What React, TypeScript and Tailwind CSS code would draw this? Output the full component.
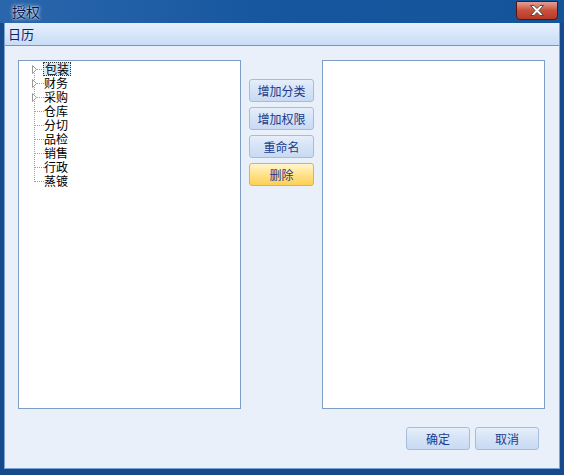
import React from "react";

const font = { fontFamily: '"Noto Sans CJK SC", "Liberation Sans", sans-serif' };

const items = [
  { name: "包装", expandable: true, selected: true },
  { name: "财务", expandable: true },
  { name: "采购", expandable: true },
  { name: "仓库" },
  { name: "分切" },
  { name: "品检" },
  { name: "销售" },
  { name: "行政" },
  { name: "蒸镀" },
];

const Btn = ({ label, yellow, w = "w-[65px]" }: { label: string; yellow?: boolean; w?: string }) => (
  <div
    className={
      (yellow
        ? "border-[#d9b54e] bg-gradient-to-b from-[#fff6cf] via-[#ffe28a] to-[#fcd050] "
        : "border-[#a5bddd] bg-gradient-to-b from-[#e6effb] via-[#d5e3f6] to-[#c8daf2] ") +
      w +
      " h-[23px] rounded-[3px] border flex items-center justify-center text-[12px] text-[#1a3a8c]"
    }
  >
    {label}
  </div>
);

const Tree = () => (
  <div className="relative pt-px">
    {/* vertical dotted line */}
    <div className="absolute left-[14px] top-[8px] h-[113px] border-l border-dotted border-[#a0a0a0]" />
    {items.map((it) => (
      <div key={it.name} className="relative h-[14px] flex items-center">
        <div className="absolute left-[15px] top-[7px] w-[9px] border-t border-dotted border-[#a0a0a0]" />
        {it.expandable && (
          <svg className="absolute left-[11px] top-[3px]" width="7" height="9" viewBox="0 0 7 9">
            <path d="M1.5 0.5 L5.5 4.5 L1.5 8.5 Z" fill="#fff" stroke="#9a9a9a" />
          </svg>
        )}
        <span
          className={
            it.selected
              ? "ml-[23px] px-[1px] leading-[12px] text-[12px] text-black bg-[#d4ebfb] border border-dotted border-[#333]"
              : "ml-[24px] leading-[14px] text-[12px] text-black"
          }
        >
          {it.name}
        </span>
      </div>
    ))}
  </div>
);

export default function App() {
  return (
    <div
      style={font}
      className="w-[564px] h-[475px] flex flex-col bg-[#174a8a] overflow-hidden"
    >
      {/* title bar */}
      <div className="h-[23px] flex items-center justify-between bg-gradient-to-r from-[#2a66ab] via-[#15569f] to-[#135499]">
        <span
          className="ml-[12px] text-[14px] text-[#061552]"
          style={{ textShadow: "0 0 2px #ffffff, 0 0 4px #d8e8ff" }}
        >
          授权
        </span>
        <div className="mr-[6px] mb-[2px] h-[19px] w-[42px] rounded-b-[4px] border border-[#5a1410] bg-gradient-to-b from-[#e4a093] via-[#c9503c] to-[#b83a26] flex items-center justify-center">
          <svg width="16" height="11" viewBox="0 0 16 11">
            <path
              d="M1.5 0.5 H5 L8 3.5 L11 0.5 H14.5 L10 5.5 L14.5 10.5 H11 L8 7.5 L5 10.5 H1.5 L6 5.5 Z"
              fill="#ffffff"
              stroke="#4a4a4a"
              strokeWidth="1"
            />
          </svg>
        </div>
      </div>
      {/* client */}
      <div className="flex-1 mx-[4px] mb-[6px] border-l border-r border-b border-[#7aa3d8] flex flex-col bg-[#e9f0fa]">
        <div className="h-[23px] flex items-center pl-[3px] text-[13px] text-[#10206a] bg-gradient-to-b from-[#e6f0fc] to-[#c8ddf6] border-b border-[#6f98cf]">
          日历
        </div>
        <div className="flex-1 flex flex-col">
          <div className="flex mt-[14px] ml-[13px] gap-[8px]">
            <div className="w-[223px] h-[349px] bg-white border border-[#7b9dc8] pl-[1px]">
              <Tree />
            </div>
            <div className="flex flex-col gap-[5px] pt-[19px]">
              <Btn label="增加分类" />
              <Btn label="增加权限" />
              <Btn label="重命名" />
              <Btn label="删除" yellow />
            </div>
            <div className="w-[223px] h-[349px] bg-white border border-[#7b9dc8]" />
          </div>
          <div className="flex justify-end gap-[5px] mt-[18px] mr-[20px]">
            <Btn label="确定" w="w-[64px]" />
            <Btn label="取消" w="w-[64px]" />
          </div>
        </div>
      </div>
    </div>
  );
}
